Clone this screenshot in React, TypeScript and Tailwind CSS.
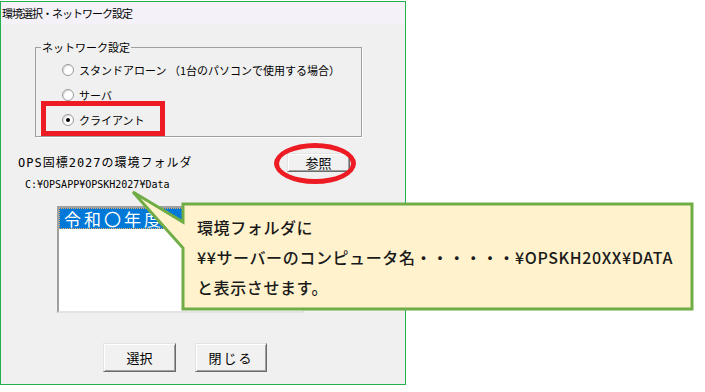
import React from "react";

const jp = { fontFamily: '"Noto Sans CJK JP", "Noto Sans", sans-serif' };
const mono = { fontFamily: '"DejaVu Sans Mono", "Noto Sans CJK JP", monospace' };

const Radio = ({ checked, label }: { checked?: boolean; label: string }) => (
  <div className="flex items-center h-[16px] pl-[26px]">
    <span className="w-[12px] h-[12px] rounded-full border border-[#9a9a9a] bg-white flex items-center justify-center shadow-[inset_1px_1px_1px_rgba(0,0,0,0.15)]">
      {checked && <span className="w-[4px] h-[4px] rounded-full bg-black" />}
    </span>
    <span className="ml-[5px] text-[11px] leading-[16px] text-black whitespace-pre">{label}</span>
  </div>
);

const WinButton = ({ label, className }: { label: string; className: string }) => (
  <button
    className={`bg-[#f1f1f1] border border-t-[#e3e3e3] border-l-[#e3e3e3] border-b-[#6a6a6a] border-r-[#6a6a6a] shadow-[inset_1px_1px_0_#fff,inset_-1px_-1px_0_#a0a0a0] text-[13px] text-black flex items-center justify-center ${className}`}
  >
    {label}
  </button>
);

export default function App() {
  return (
    <div className="relative w-[705px] h-[392px] bg-white overflow-hidden" style={jp}>
      {/* dialog window */}
      <div className="mt-[1px] w-[406px] h-[384px] border border-[#22b14c] flex flex-col">
        <div className="h-[22px] bg-[#f4f2f8] px-[1px] text-[11px] leading-[22px] tracking-[-1px] text-black">
          環境選択・ネットワーク設定
        </div>
        <div className="flex-1 bg-[#f0f0f0] flex flex-col">
          <fieldset className="ml-[34px] mt-[16px] w-[327px] h-[97px] border border-[#a0a0a0] shadow-[1px_1px_0_#fff]">
            <legend className="ml-[5px] px-[1px] text-[11px] leading-[14px] text-black">ネットワーク設定</legend>
            <div className="mt-[8px]">
              <Radio label="スタンドアローン （1台のパソコンで使用する場合）" />
            </div>
            <div className="mt-[9px]">
              <Radio label="サーバ" />
            </div>
            <div className="mt-[9px]">
              <Radio checked label="クライアント" />
            </div>
          </fieldset>

          <div className="mt-[16px] h-[19px] flex items-center">
            <span className="ml-[17px] text-[12px] tracking-[1px] text-black" style={mono}>
              OPS固標2027の環境フォルダ
            </span>
            <WinButton label="参照" className="ml-auto mr-[55px] w-[63px] h-[19px]" />
          </div>

          <div className="mt-[7px] ml-[24px] text-[10px] leading-[12px] text-black" style={mono}>
            C:¥OPSAPP¥OPSKH2027¥Data
          </div>

          <div className="mt-[15px] ml-[56px] w-[247px] h-[107px] bg-white border-2 border-t-[#a0a0a0] border-l-[#a0a0a0] border-b-[#e3e3e3] border-r-[#e3e3e3]">
            <div className="h-[21px] bg-[#0078d7] border border-dotted border-[#f0b060] text-white text-[17px] leading-[19px] tracking-[3px] pl-[4px] whitespace-nowrap">
              令和〇年度
            </div>
          </div>

          <div className="mt-[30px] flex">
            <WinButton label="選択" className="ml-[102px] w-[73px] h-[29px]" />
            <WinButton label="閉じる" className="ml-[19px] w-[72px] h-[29px] tracking-[2px]" />
          </div>
        </div>
      </div>

      {/* red highlight rectangle */}
      <div className="absolute left-[41px] top-[101px] w-[124px] h-[35px] border-[5px] border-[#ed1c24]" />
      {/* red ellipse */}
      <div className="absolute left-[274px] top-[143px] w-[82px] h-[41px] rounded-[50%] border-[5px] border-[#ed1c24]" />

      {/* callout */}
      <svg className="absolute left-0 top-0" width="705" height="392">
        <path
          d="M183 204 H692 V309 H183 V248 L133 192 L183 222 Z"
          fill="#fff2cc"
          stroke="#70ad47"
          strokeWidth="3"
          strokeLinejoin="miter"
        />
      </svg>
      <div className="absolute left-[197px] top-[212px] text-[16px] leading-[30px] tracking-[0.6px] font-medium text-[#1a1a1a] whitespace-nowrap">
        <div>環境フォルダに</div>
        <div>¥¥サーバーのコンピュータ名・・・・・・¥OPSKH20XX¥DATA</div>
        <div>と表示させます。</div>
      </div>
    </div>
  );
}
